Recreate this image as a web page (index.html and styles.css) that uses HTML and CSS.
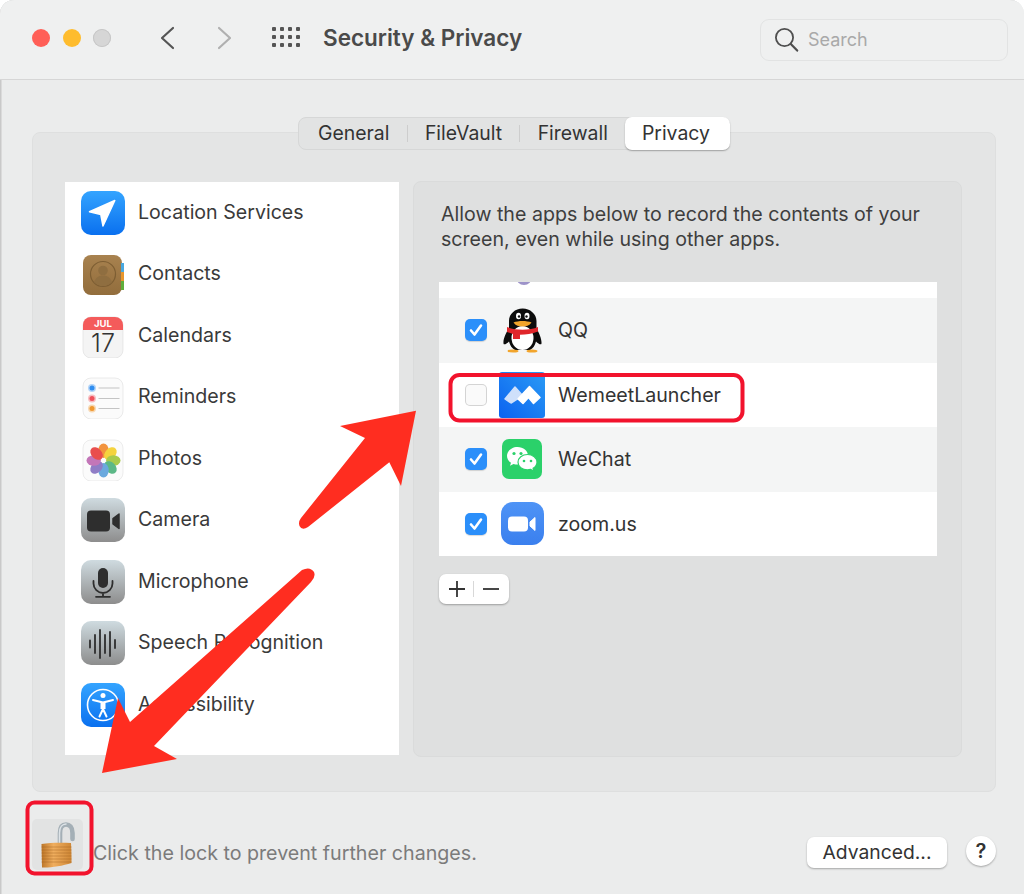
FILE: index.html
```html
<!DOCTYPE html>
<html lang="en">
<head>
<meta charset="utf-8">
<title>Security &amp; Privacy</title>
<link rel="stylesheet" href="styles.css">
</head>
<body>
<svg class="defs" width="0" height="0" aria-hidden="true">
  <defs>
    <linearGradient id="blue" x1="0" y1="0" x2="0" y2="1"><stop offset="0" stop-color="#34a4ff"/><stop offset="1" stop-color="#0a70ef"/></linearGradient>
    <linearGradient id="gray" x1="0" y1="0" x2="0" y2="1"><stop offset="0" stop-color="#cfdbe0"/><stop offset="1" stop-color="#8d8d8d"/></linearGradient>
    <linearGradient id="wem" x1="0" y1="1" x2="1" y2="0"><stop offset="0" stop-color="#0b62f0"/><stop offset="1" stop-color="#2a9bf5"/></linearGradient>
    <linearGradient id="zoomg" x1="0" y1="0" x2="0" y2="1"><stop offset="0" stop-color="#4f94f6"/><stop offset="1" stop-color="#3a7fee"/></linearGradient>
    <linearGradient id="brass" x1="0" y1="0" x2="1" y2="0"><stop offset="0" stop-color="#bd7628"/><stop offset=".4" stop-color="#f0ae5e"/><stop offset="1" stop-color="#cf8836"/></linearGradient>
    <linearGradient id="book" x1="0" y1="0" x2="0" y2="1"><stop offset="0" stop-color="#a8824f"/><stop offset="1" stop-color="#926d3c"/></linearGradient>
  </defs>
</svg>
<div class="window">
  <header class="titlebar">
    <div class="lights">
      <span class="light red"></span>
      <span class="light yellow"></span>
      <span class="light off"></span>
    </div>
    <svg class="chev back" width="16" height="24" viewBox="0 0 16 24"><path d="M14 2 3 12l11 10" fill="none" stroke="#555" stroke-width="2.2" stroke-linecap="round" stroke-linejoin="round"/></svg>
    <svg class="chev forward" width="16" height="24" viewBox="0 0 16 24"><path d="M2 2l11 10L2 22" fill="none" stroke="#b0b0b0" stroke-width="2.2" stroke-linecap="round" stroke-linejoin="round"/></svg>
    <svg class="grid" width="28" height="21" viewBox="0 0 28 21" fill="#555">
      <rect x="0" y="0" width="4" height="4" rx="1"/><rect x="8" y="0" width="4" height="4" rx="1"/><rect x="16" y="0" width="4" height="4" rx="1"/><rect x="24" y="0" width="4" height="4" rx="1"/>
      <rect x="0" y="8" width="4" height="4" rx="1"/><rect x="8" y="8" width="4" height="4" rx="1"/><rect x="16" y="8" width="4" height="4" rx="1"/><rect x="24" y="8" width="4" height="4" rx="1"/>
      <rect x="0" y="16" width="4" height="4" rx="1"/><rect x="8" y="16" width="4" height="4" rx="1"/><rect x="16" y="16" width="4" height="4" rx="1"/><rect x="24" y="16" width="4" height="4" rx="1"/>
    </svg>
    <h1 class="title">Security &amp; Privacy</h1>
    <div class="search">
      <svg width="25" height="26" viewBox="0 0 25 26"><circle cx="10.5" cy="10.5" r="8.6" fill="none" stroke="#4f4f4f" stroke-width="1.8"/><path d="M16.8 17l6.4 6.6" stroke="#4f4f4f" stroke-width="2.2" stroke-linecap="round"/></svg>
      <span>Search</span>
    </div>
  </header>

  <main class="panel">
    <nav class="tabs">
      <span class="tab">General</span><i class="sep"></i>
      <span class="tab">FileVault</span><i class="sep"></i>
      <span class="tab">Firewall</span>
      <span class="tab active">Privacy</span>
    </nav>
    <div class="panes">
      <ul class="services">
        <li>
          <svg class="ico" width="44" height="44" viewBox="0 0 44 44"><rect width="44" height="44" rx="10" fill="url(#blue)"/><path d="M8.500 20.800 33.800 9.500 22 35 19.800 23.500Z" fill="#fff" stroke="#fff" stroke-width="1.500" stroke-linejoin="round"/></svg>
          <span>Location Services</span>
        </li>
        <li>
          <svg class="ico" width="44" height="44" viewBox="0 0 44 44"><g transform="translate(0 2)"><rect x="2" y="1" width="39" height="40" rx="8" fill="url(#book)"/><path d="M40 9h3v9h-3Z" fill="#49a8e0"/><path d="M40 18h3v9h-3Z" fill="#e8952c"/><path d="M40 27h3v9h-3Z" fill="#5fae3c"/><circle cx="22" cy="20" r="12.500" fill="none" stroke="#7d5e33" stroke-width="1.200"/><circle cx="22" cy="16.500" r="4.800" fill="#8f6e40"/><path d="M13 28c2-5 5-6.500 9-6.500s7 1.500 9 6.500c-2.500 2.800-5.500 4-9 4s-6.500-1.200-9-4Z" fill="#8f6e40"/></g></svg>
          <span>Contacts</span>
        </li>
        <li>
          <svg class="ico" width="44" height="44" viewBox="0 0 44 44"><g transform="translate(-1 2)"><rect x="3" y="1" width="40" height="41" rx="8" fill="#f4f4f4" stroke="#dcdcdc" stroke-width=".6"/><path d="M3 14V9a8 8 0 0 1 8-8h24a8 8 0 0 1 8 8v5Z" fill="#f45b5b"/><text class="cal-m" x="23" y="11" text-anchor="middle">JUL</text><text class="cal-d" x="23" y="36" text-anchor="middle">17</text></g></svg>
          <span>Calendars</span>
        </li>
        <li>
          <svg class="ico" width="44" height="44" viewBox="0 0 44 44"><g transform="translate(-1 2)"><rect x="3" y="1" width="40" height="41" rx="8" fill="#fbfbfb" stroke="#dedede" stroke-width=".6"/><circle cx="12" cy="11" r="4" fill="#2f8df0" opacity=".35"/><circle cx="12" cy="11" r="2.500" fill="#2f8df0"/><circle cx="12" cy="21.500" r="4" fill="#f0505a" opacity=".35"/><circle cx="12" cy="21.500" r="2.500" fill="#f0505a"/><circle cx="12" cy="31.500" r="4" fill="#f0982e" opacity=".35"/><circle cx="12" cy="31.500" r="2.500" fill="#f0982e"/><path d="M18.500 11h21M18.500 21.500h21M18.500 31.500h21" stroke="#c4c4c4" stroke-width="1.200"/></g></svg>
          <span>Reminders</span>
        </li>
        <li>
          <svg class="ico" width="44" height="44" viewBox="0 0 44 44"><g transform="translate(-1 2)"><rect x="3" y="1" width="40" height="41" rx="8" fill="#fbfbfb" stroke="#e0e0e0" stroke-width=".6"/>
            <g transform="translate(23.500 21.500)" opacity=".92">
              <ellipse cy="-9.800" rx="5.200" ry="7.200" fill="#f28b2e"/>
              <ellipse cy="-9.800" rx="5.200" ry="7.200" fill="#f5d02f" transform="rotate(45)"/>
              <ellipse cy="-9.800" rx="5.200" ry="7.200" fill="#a3c63f" transform="rotate(90)"/>
              <ellipse cy="-9.800" rx="5.200" ry="7.200" fill="#4fb37e" transform="rotate(135)"/>
              <ellipse cy="-9.800" rx="5.200" ry="7.200" fill="#5ea3dc" transform="rotate(180)"/>
              <ellipse cy="-9.800" rx="5.200" ry="7.200" fill="#8673c2" transform="rotate(225)"/>
              <ellipse cy="-9.800" rx="5.200" ry="7.200" fill="#bf6bb3" transform="rotate(270)"/>
              <ellipse cy="-9.800" rx="5.200" ry="7.200" fill="#e8403f" transform="rotate(315)"/>
            </g></g></svg>
          <span>Photos</span>
        </li>
        <li>
          <svg class="ico" width="44" height="44" viewBox="0 0 44 44"><rect width="44" height="44" rx="10" fill="url(#gray)"/><rect x="6" y="12.500" width="23" height="21" rx="4" fill="#2e2e2e"/><path d="M32 20.500l6-4.500v14.500l-6-4.500Z" fill="#2e2e2e" stroke="#2e2e2e" stroke-width="1.500" stroke-linejoin="round"/></svg>
          <span>Camera</span>
        </li>
        <li>
          <svg class="ico" width="44" height="44" viewBox="0 0 44 44"><rect width="44" height="44" rx="10" fill="url(#gray)"/><rect x="17" y="8" width="10" height="20" rx="5" fill="#2e2e2e"/><path d="M12.500 21v2.500a9.500 9.500 0 0 0 19 0V21M22 33v3.500M15 36.800h14" fill="none" stroke="#2e2e2e" stroke-width="1.800" stroke-linecap="round"/></svg>
          <span>Microphone</span>
        </li>
        <li>
          <svg class="ico" width="44" height="44" viewBox="0 0 44 44"><rect width="44" height="44" rx="10" fill="url(#gray)"/><path d="M9 19.500v7M14 14v18M19 9v28M24 14v18M29 11v24M34 19v8" fill="none" stroke="#2e2e2e" stroke-width="1.800" stroke-linecap="round"/></svg>
          <span>Speech Recognition</span>
        </li>
        <li>
          <svg class="ico" width="44" height="44" viewBox="0 0 44 44"><rect width="44" height="44" rx="10" fill="url(#blue)"/><circle cx="22" cy="22" r="15.500" fill="none" stroke="#fff" stroke-width="1.600"/><circle cx="22" cy="12.500" r="2.500" fill="#fff"/><path d="M12 17l10 2.500L32 17M22 19.500V26M22 26l-3.500 7.500M22 26l3.500 7.500" fill="none" stroke="#fff" stroke-width="2" stroke-linecap="round" stroke-linejoin="round"/><path d="M19.500 19h5v7h-5Z" fill="#fff"/></svg>
          <span>Accessibility</span>
        </li>
      </ul>

      <section class="detail">
        <p class="intro">Allow the apps below to record the contents of your screen, even while using other apps.</p>
        <div class="apps">
          <div class="app peek">
            <svg class="peek-ico" width="20" height="4" viewBox="0 0 20 4"><ellipse cx="9" cy="-5" rx="8" ry="8" fill="#9d93c9"/></svg>
          </div>
          <div class="app alt">
            <span class="check on"><svg width="22" height="22" viewBox="0 0 22 22"><path d="M6 11.500l3.500 4L16 6.500" fill="none" stroke="#fff" stroke-width="2.600" stroke-linecap="round" stroke-linejoin="round"/></svg></span>
            <svg class="appico" width="46" height="48" viewBox="0 0 46 48">
              <path d="M23.700 2.500C16 2.500 10 8 10 15v7C7 27 4 33 4.500 37.500c.3 1.800 3 .5 5.500-2 1 4 3 7 6 8.500h15c3-1.500 5-4.500 6-8.500 2.500 2.500 5.200 3.800 5.500 2C42.900 33 40 27 37.500 22v-7C37.500 8 31 2.500 23.700 2.500Z" fill="#0c0c0c"/>
              <ellipse cx="23.500" cy="32" rx="11" ry="12" fill="#fff"/>
              <ellipse cx="19.500" cy="10" rx="2.500" ry="3.200" fill="#fff"/><ellipse cx="28" cy="10" rx="2.500" ry="3.200" fill="#fff"/>
              <circle cx="20" cy="10.500" r="1.200" fill="#111"/><circle cx="27.500" cy="10.500" r="1.200" fill="#111"/>
              <path d="M14.500 16.500c5-2 13-2 18 0-2 3-5.500 4-9 4s-7-1-9-4Z" fill="#f2a52c"/>
              <path d="M8 21c8 3.500 23 3.500 31 0v4.500c-6 2.500-12 3-18 3.200V33h-7v-5l-6-2Z" fill="#e0262b"/>
              <ellipse cx="14" cy="45" rx="5.500" ry="1.600" fill="#f2a52c"/><ellipse cx="33" cy="45" rx="5.500" ry="1.600" fill="#f2a52c"/>
            </svg>
            <span class="name">QQ</span>
          </div>
          <div class="app">
            <span class="check"></span>
            <svg class="appico" width="46" height="46" viewBox="0 0 46 46"><rect width="46" height="46" rx="3" fill="url(#wem)"/><path d="M6 27 16 15 23.500 23.500 12 31Z" fill="#cfe0fb" stroke="#cfe0fb" stroke-width="1.500" stroke-linejoin="round"/><path d="M19 27 30.500 14.500 41 25.500 34.500 31.500 29.500 25.500 24 31.500Z" fill="#fff" stroke="#fff" stroke-width="1.500" stroke-linejoin="round"/></svg>
            <span class="name">WemeetLauncher</span>
          </div>
          <div class="app alt">
            <span class="check on"><svg width="22" height="22" viewBox="0 0 22 22"><path d="M6 11.500l3.500 4L16 6.500" fill="none" stroke="#fff" stroke-width="2.600" stroke-linecap="round" stroke-linejoin="round"/></svg></span>
            <svg class="appico" width="46" height="40" viewBox="0 0 46 40"><rect x="3" width="40" height="40" rx="7" fill="#2bd16a"/><path d="M18.500 8C12.700 8 8 11.900 8 16.800c0 2.900 1.500 5.300 4 7l-1 3 3.500-1.900c1.300.4 2.600.6 4 .6 5.800 0 10.500-3.900 10.500-8.800S24.300 8 18.500 8Z" fill="#fff"/><path d="M28.500 15.500c-5.300 0-9.500 3.400-9.500 7.700s4.200 7.700 9.500 7.700c1.100 0 2.200-.2 3.200-.5l3.300 1.800-.9-2.900c2.300-1.400 3.900-3.600 3.900-6.100 0-4.300-4.200-7.700-9.500-7.700Z" fill="#fff" stroke="#2bd16a" stroke-width="1.200"/><g fill="#2bd16a"><circle cx="15" cy="14.500" r="1.600"/><circle cx="22" cy="14.500" r="1.600"/><circle cx="25" cy="22" r="1.300"/><circle cx="32" cy="22" r="1.300"/></g></svg>
            <span class="name">WeChat</span>
          </div>
          <div class="app">
            <span class="check on"><svg width="22" height="22" viewBox="0 0 22 22"><path d="M6 11.500l3.500 4L16 6.500" fill="none" stroke="#fff" stroke-width="2.600" stroke-linecap="round" stroke-linejoin="round"/></svg></span>
            <svg class="appico" width="46" height="44" viewBox="0 0 46 44"><rect x="2" y="0" width="43" height="43" rx="12" fill="url(#zoomg)"/><rect x="9" y="14.500" width="20" height="15" rx="4" fill="#fff"/><path d="M31 20l5-4.500v13L31 24Z" fill="#fff" stroke="#fff" stroke-width="1" stroke-linejoin="round"/></svg>
            <span class="name">zoom.us</span>
          </div>
        </div>
        <div class="plusminus">
          <svg width="34" height="30" viewBox="0 0 34 30"><path d="M18 7v16M10 15h16" stroke="#333" stroke-width="1.800" fill="none"/></svg>
          <i class="pm-sep"></i>
          <svg width="34" height="30" viewBox="0 0 34 30"><path d="M9 15h16" stroke="#333" stroke-width="1.800" fill="none"/></svg>
        </div>
      </section>
    </div>
  </main>

  <footer class="footer">
    <div class="lock">
      <svg width="51" height="51" viewBox="0 0 51 51"><path d="M28 25V14C28 8 30.500 5.500 34 5.500S40.500 8 40.500 14v6" fill="none" stroke="#a4afb6" stroke-width="4.600" stroke-linecap="round"/><path d="M27.500 25V14C27.500 8 30.500 5 34 5" fill="none" stroke="#dde3e7" stroke-width="1.500" stroke-linecap="round"/><path d="M9.500 25C18 23.500 30 23.500 39 24c.5 8 .5 16 .5 20-9.500 3-21.500 5-29.500 4.500Z" fill="url(#brass)"/><path d="M9.500 28h30M9.500 31h30M9.500 34h30M9.500 37h30M9.500 40h30M9.500 43h30" stroke="#99591c" stroke-width=".7" opacity=".55"/></svg>
    </div>
    <p class="hint">Click the lock to prevent further changes.</p>
    <button class="advanced" type="button">Advanced...</button>
    <button class="help" type="button">?</button>
  </footer>
</div>

<svg class="annotations" width="1024" height="894" viewBox="0 0 1024 894" aria-hidden="true">
  <rect x="450.500" y="375" width="292" height="45.500" rx="9" fill="none" stroke="#f2132d" stroke-width="4"/>
  <rect x="27.500" y="802.500" width="64" height="71" rx="7" fill="none" stroke="#f2132d" stroke-width="4"/>
  <path d="M365 438 340 426 416 410.700 401 486 389.300 462.300 308 527Q302 531 299.500 526 298 522 301 518Z" fill="#ff2d20"/>
  <path d="M130 722 302 570Q310 566 314 572 316 577 311 582L154 746 177 759 102 773 118 698Z" fill="#ff2d20"/>
</svg>
</body>
</html>
```
FILE: styles.css
```css
* { box-sizing: border-box; }
html, body { margin: 0; padding: 0; }
body {
  width: 1024px;
  height: 894px;
  overflow: hidden;
  background: #fff;
  font-family: Inter, "Liberation Sans", sans-serif;
  color: #333;
  position: relative;
}
.defs { position: absolute; }
.window {
  width: 1024px;
  height: 894px;
  background: #ebecec;
  border-radius: 14px 14px 0 0;
  box-shadow: inset 1.500px 1px 0 #c9c9c9;
  display: flex;
  flex-direction: column;
  overflow: hidden;
}

.titlebar {
  height: 80px;
  flex: none;
  background: #eff0f0;
  border-bottom: 1.500px solid #d6d6d6;
  display: flex;
  align-items: center;
  padding: 0 16px 4px 32px;
}
.lights { display: flex; gap: 12.500px; margin-right: 48px; }
.light { width: 18px; height: 18px; border-radius: 50%; }
.red { background: #ff5f57; }
.yellow { background: #febc2e; }
.off { background: #d6d6d6; box-shadow: inset 0 0 0 1px #c6c6c6; }
.back { margin-right: 42px; }
.forward { margin-right: 39px; }
.grid { margin-right: 23px; }
.title {
  margin: 0;
  font-size: 22.500px;
  font-weight: 600;
  color: #4a4a4a;
  flex: 1;
}
.search {
  width: 248px;
  height: 42px;
  margin-top: 4px;
  border: 1px solid #e2e3e3;
  border-radius: 9px;
  display: flex;
  align-items: center;
  gap: 9px;
  padding-left: 13px;
  font-size: 18px;
  color: #a9a9a9;
}

.panel {
  margin: 52px 28px 0 32px;
  height: 660px;
  background: #e4e5e5;
  border: 1px solid #dedfdf;
  border-radius: 8px;
  flex: none;
}
.tabs {
  width: 432px;
  height: 33px;
  margin: -16px auto 0;
  padding-left: 1px;
  background: #e2e3e3;
  border: 1px solid #d6d7d7;
  border-radius: 8px;
  display: flex;
  align-items: center;
  font-size: 19.400px;
  color: #333;
}
.tab { padding: 0 18px; line-height: 31px; flex: none; }
.tab.active {
  margin-left: -1px;
  width: 105px;
  padding: 0 3px 0 0;
  text-align: center;
  height: 33px;
  line-height: 33px;
  background: #fff;
  border-radius: 7px;
  box-shadow: 0 1px 1.500px rgba(0, 0, 0, .3);
}
.sep { width: 1px; height: 17px; background: #cdcdcd; margin: 0 -.75px; flex: none; }

.panes {
  display: flex;
  gap: 14px;
  padding: 32px 0 0 32px;
}
.services {
  list-style: none;
  margin: 0;
  padding: 0;
  width: 334px;
  height: 573px;
  background: #fff;
  flex: none;
}
.services li {
  height: 61.500px;
  display: flex;
  align-items: center;
  gap: 13px;
  padding-left: 16px;
  font-size: 19.600px;
  color: #3a3a3a;
}
.services li span { padding-bottom: 2px; }
.ico { flex: none; }
.cal-m { font: 700 9.500px Inter, sans-serif; fill: #fff; }
.cal-d { font: 300 25px Inter, sans-serif; fill: #333; }

.detail {
  width: 549px;
  height: 576px;
  margin-top: -1px;
  background: #dfe0e0;
  border: 1px solid #dadbdb;
  border-radius: 8px;
  padding: 0 25px;
}
.intro {
  margin: 20px 0 30px 2px;
  width: 500px;
  font-size: 19.600px;
  line-height: 25px;
  color: #3e3e3e;
}
.apps { width: 498px; height: 274px; background: #fff; }
.app {
  height: 64.500px;
  display: flex;
  align-items: center;
  padding-left: 26px;
  font-size: 19.600px;
  color: #333;
}
.app.alt { background: #f4f5f5; }
.app.peek { height: 16px; padding-left: 76px; align-items: flex-start; overflow: hidden; }
.peek-ico { display: block; }
.check {
  width: 22px;
  height: 22px;
  border-radius: 5px;
  background: #fafafa;
  box-shadow: inset 0 0 0 1px #d4d4d4;
  flex: none;
  margin-right: 12px;
}
.check svg { display: block; }
.check.on { background: #2b8ffa; box-shadow: 0 1px 1px rgba(0, 0, 0, .15); }
.appico { flex: none; margin-right: 13px; }
.plusminus {
  width: 70px;
  height: 30px;
  margin-top: 18px;
  background: #fff;
  border-radius: 7px;
  box-shadow: 0 1px 2px rgba(0, 0, 0, .3);
  display: flex;
  align-items: center;
}
.pm-sep { width: 1px; height: 16px; background: #d8d8d8; }

.footer {
  flex: 1;
  display: flex;
  align-items: flex-start;
  padding: 27px 28px 0 32px;
}
.lock {
  width: 51px;
  height: 51px;
  background: #e2e3e3;
  border-radius: 5px;
  flex: none;
}
.lock svg { display: block; }
.hint {
  margin: 22px auto 0 10px;
  font-size: 19.650px;
  line-height: 24px;
  color: #7b7b7b;
}
.advanced {
  width: 140px;
  height: 31px;
  margin-top: 18px;
  background: #fff;
  border: 0;
  border-radius: 7px;
  box-shadow: 0 1px 2px rgba(0, 0, 0, .3);
  font: 400 19.300px Inter, sans-serif;
  color: #333;
  padding: 0 0 2px;
}
.help {
  width: 30px;
  height: 30px;
  margin: 17px 0 0 19px;
  background: #fff;
  border: 0;
  border-radius: 50%;
  box-shadow: 0 1px 2px rgba(0, 0, 0, .3);
  font: 600 20px Inter, sans-serif;
  color: #333;
  padding: 0;
}

.annotations { position: absolute; left: 0; top: 0; pointer-events: none; }
```
